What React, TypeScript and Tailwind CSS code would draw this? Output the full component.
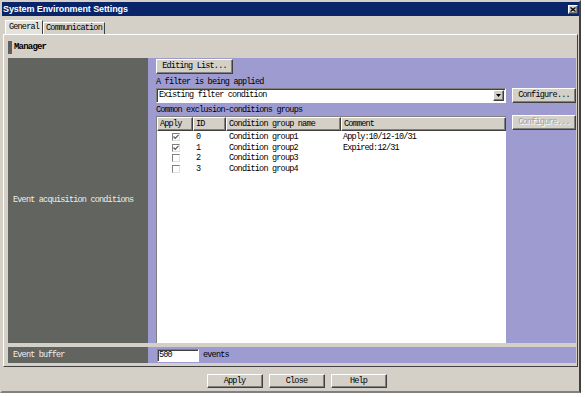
import React from 'react';

const MONO = "font-['Liberation_Mono',monospace] text-[8.5px] tracking-[-0.8px] leading-none";
const RAISED =
  'border border-t-white border-l-white border-r-[#404040] border-b-[#404040] shadow-[inset_-1px_-1px_0_#808080] bg-[#d4d0c8]';
const SUNKEN =
  'border border-t-[#808080] border-l-[#808080] border-r-white border-b-white shadow-[inset_1px_1px_0_#404040] bg-white';

const rows = [
  { checked: true, id: '0', name: 'Condition group1', comment: 'Apply:10/12-10/31' },
  { checked: true, id: '1', name: 'Condition group2', comment: 'Expired:12/31' },
  { checked: false, id: '2', name: 'Condition group3', comment: '' },
  { checked: false, id: '3', name: 'Condition group4', comment: '' },
];

function Button({ label, className = '', disabled = false }: { label: string; className?: string; disabled?: boolean }) {
  return (
    <div
      className={`${RAISED} ${MONO} flex shrink-0 items-center justify-center ${
        disabled ? 'text-[#a0a0a0] [text-shadow:1px_1px_0_#fff]' : 'text-black'
      } ${className}`}
    >
      {label}
    </div>
  );
}

function CheckBox({ checked }: { checked: boolean }) {
  return (
    <div className="flex h-[8px] w-[8px] items-center justify-center border border-t-[#808080] border-l-[#808080] border-r-[#e0e0e0] border-b-[#e0e0e0] bg-white">
      {checked && (
        <svg width="6" height="6" viewBox="0 0 6 6">
          <path d="M0.5 2.5 L2.2 4.3 L5.5 0.8" stroke="#555" strokeWidth="1.2" fill="none" />
        </svg>
      )}
    </div>
  );
}

export default function App() {
  return (
    <div className="h-[397px] w-[585px] bg-white">
      <div className="flex h-[393px] w-[581px] flex-col border-2 border-t-[#d4d0c8] border-l-[#d4d0c8] border-r-[#404040] border-b-[#808080] bg-[#d4d0c8]">
        {/* title bar */}
        <div className="flex h-[14px] items-center justify-between bg-[#0a246a] pl-[1px] pr-[1px]">
          <span className="font-['Liberation_Sans',sans-serif] text-[9px] font-bold leading-none tracking-[-0.1px] text-white">
            System Environment Settings
          </span>
          <div className={`${RAISED} flex h-[9px] w-[10px] items-center justify-center`}>
            <svg width="6" height="5" viewBox="0 0 6 5">
              <path d="M0.5 0.5 L5.5 4.5 M5.5 0.5 L0.5 4.5" stroke="#000" strokeWidth="1.3" />
            </svg>
          </div>
        </div>

        {/* tabs */}
        <div className="mt-[3px] flex h-[15px] items-end pl-[3px]">
          <div className={`${MONO} flex h-[14px] w-[38px] items-center justify-center border border-b-0 border-t-white border-l-white border-r-[#404040] bg-[#e4e2dc]`}>
            General
          </div>
          <div className={`${MONO} flex h-[12px] w-[62px] items-center justify-center border border-b-0 border-t-white border-l-white border-r-[#404040]`}>
            Communication
          </div>
        </div>

        {/* panel */}
        <div className="mx-[1px] flex h-[333px] flex-col border border-t-white border-l-white border-r-[#404040] border-b-[#404040] pl-[4px] pr-[1px]">
          <div className="mt-[2px] flex h-[21px] items-center gap-[2px]">
            <div className="h-[13px] w-[4px] bg-[#5e5e5e]" />
            <span className="font-['Liberation_Mono',monospace] text-[9px] font-bold leading-none tracking-[-0.8px] text-black">
              Manager
            </span>
          </div>

          <div className="flex h-[285px]">
            <div className={`${MONO} flex w-[140px] items-center bg-[#626460] pl-[5px] text-[#eeeeee]`}>
              Event acquisition conditions
            </div>
            <div className="flex flex-1 flex-col bg-[#9d9bd0] pl-[8px] pt-[1px]">
              <Button label="Editing List..." className="h-[15px] w-[77px]" />
              <div className={`${MONO} flex h-[14px] items-end pb-[2px]`}>A filter is being applied</div>
              <div className="flex items-center">
                <div className={`${SUNKEN} flex h-[15px] w-[350px] items-center justify-between pr-[1px]`}>
                  <span className={`${MONO} pl-[2px]`}>Existing filter condition</span>
                  <div className={`${RAISED} flex h-[11px] w-[11px] items-center justify-center`}>
                    <svg width="5" height="3" viewBox="0 0 5 3">
                      <path d="M0 0 H5 L2.5 3 Z" fill="#000" />
                    </svg>
                  </div>
                </div>
                <Button label="Configure..." className="ml-[6px] h-[15px] w-[64px]" />
              </div>
              <div className={`${MONO} flex h-[13px] items-end pb-[2px]`}>Common exclusion-conditions groups</div>
              <div className="flex flex-1 items-start">
                <div className="flex h-full w-[350px] flex-col border border-t-[#808080] border-l-[#808080] border-r-0 border-b-0 bg-white">
                  <div className={`${MONO} flex h-[14px] shrink-0`}>
                    <div className={`${RAISED} flex w-[36px] items-center pl-[2px]`}>Apply</div>
                    <div className={`${RAISED} flex w-[33px] items-center pl-[2px]`}>ID</div>
                    <div className={`${RAISED} flex w-[115px] items-center pl-[2px]`}>Condition group name</div>
                    <div className={`${RAISED} flex flex-1 items-center pl-[2px]`}>Comment</div>
                  </div>
                  <div className="pt-[1px]">
                    {rows.map((r) => (
                      <div key={r.id} className={`${MONO} flex h-[10.6px] items-center`}>
                        <div className="flex w-[36px] pl-[15px]">
                          <CheckBox checked={r.checked} />
                        </div>
                        <div className="w-[33px] pl-[3px]">{r.id}</div>
                        <div className="w-[115px] pl-[3px]">{r.name}</div>
                        <div className="flex-1 pl-[2px]">{r.comment}</div>
                      </div>
                    ))}
                  </div>
                </div>
                <Button label="Configure..." disabled className="ml-[6px] mt-[-1px] h-[15px] w-[64px]" />
              </div>
            </div>
          </div>

          <div className="mt-[4px] flex h-[16px]">
            <div className={`${MONO} flex w-[140px] items-center bg-[#626460] pl-[5px] text-[#eeeeee]`}>Event buffer</div>
            <div className="flex flex-1 items-center bg-[#9d9bd0] pl-[9px]">
              <div className={`${SUNKEN} ${MONO} flex h-[13px] w-[42px] items-center pl-[1px]`}>500</div>
              <span className={`${MONO} ml-[4px]`}>events</span>
            </div>
          </div>
        </div>

        {/* buttons */}
        <div className="mt-[7px] flex justify-center gap-[6px] pl-[12px]">
          <Button label="Apply" className="h-[14px] w-[56px]" />
          <Button label="Close" className="h-[14px] w-[56px]" />
          <Button label="Help" className="h-[14px] w-[56px]" />
        </div>
      </div>
    </div>
  );
}
